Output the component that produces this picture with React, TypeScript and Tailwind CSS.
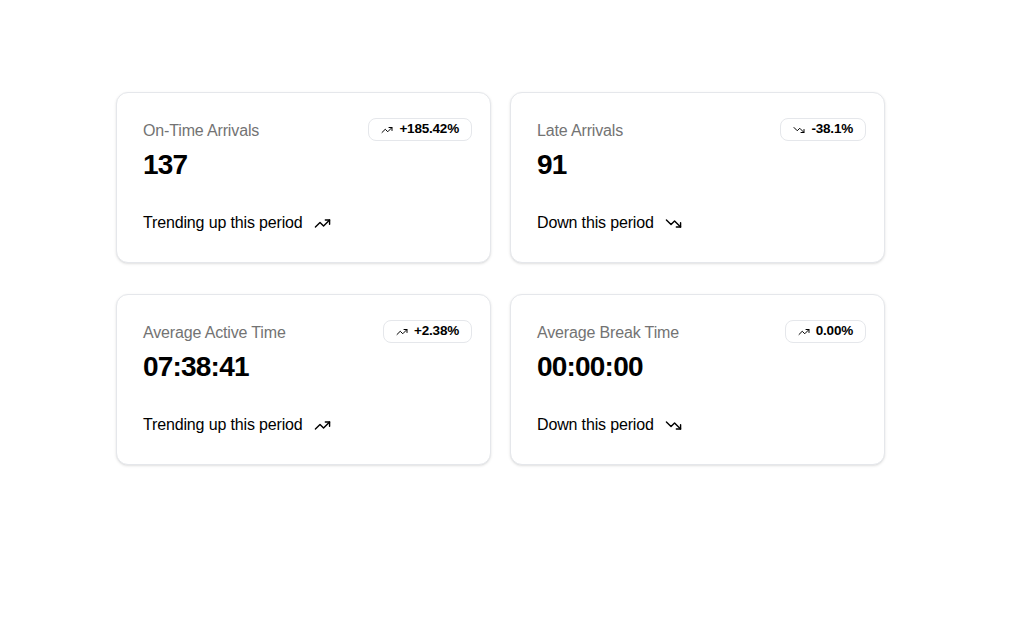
import React from "react";
import { TrendingUp, TrendingDown } from "lucide-react";

interface Stat {
  label: string;
  value: string;
  change: string;
  badgeUp: boolean;
  footer: string;
  footerUp: boolean;
}

const stats: Stat[] = [
  { label: "On-Time Arrivals", value: "137", change: "+185.42%", badgeUp: true, footer: "Trending up this period", footerUp: true },
  { label: "Late Arrivals", value: "91", change: "-38.1%", badgeUp: false, footer: "Down this period", footerUp: false },
  { label: "Average Active Time", value: "07:38:41", change: "+2.38%", badgeUp: true, footer: "Trending up this period", footerUp: true },
  { label: "Average Break Time", value: "00:00:00", change: "0.00%", badgeUp: true, footer: "Down this period", footerUp: false },
];

function StatCard({ stat }: { stat: Stat }) {
  return (
    <div className="h-[171px] rounded-xl border border-gray-200 bg-white shadow-sm pl-[26px] pr-[18px] pt-[25px]">
      <div className="flex items-start justify-between">
        <div className="text-[16px] leading-6 tracking-[-0.15px] text-[#737373] pt-[1px]">{stat.label}</div>
        <div className="flex items-center gap-[6px] rounded-lg border border-gray-200 px-[12px] h-[23px] text-[13.5px] font-bold tracking-[-0.2px] text-black">
          {stat.badgeUp ? (
            <TrendingUp size={12} strokeWidth={2} />
          ) : (
            <TrendingDown size={12} strokeWidth={2} />
          )}
          {stat.change}
        </div>
      </div>
      <div className="text-[28px] leading-9 font-bold tracking-[-0.8px] text-black mt-[4px]">{stat.value}</div>
      <div className="mt-[28px] flex items-center gap-[11px] text-[16px] leading-6 tracking-[-0.15px] text-black">
        {stat.footer}
        {stat.footerUp ? (
          <TrendingUp size={17} strokeWidth={2} />
        ) : (
          <TrendingDown size={17} strokeWidth={2} />
        )}
      </div>
    </div>
  );
}

export default function App() {
  return (
    <div
      className="min-h-screen bg-white pl-[116px] pt-[92px]"
      style={{ fontFamily: '"Liberation Sans", Arial, sans-serif' }}
    >
      <div className="grid w-[769px] grid-cols-2 gap-x-[19px] gap-y-[31px]">
        {stats.map((s, i) => (
          <StatCard key={i} stat={s} />
        ))}
      </div>
    </div>
  );
}
